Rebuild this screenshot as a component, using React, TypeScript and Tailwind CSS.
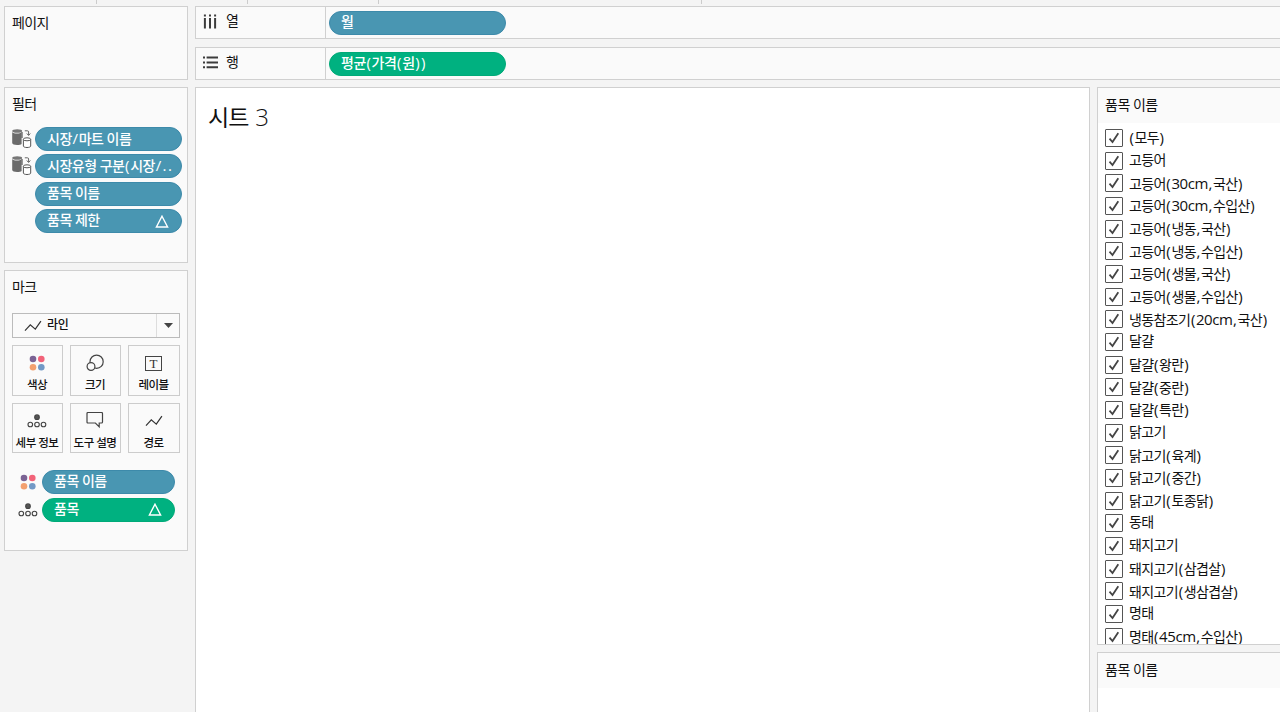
import { clsx } from "clsx";
import type { ReactNode } from "react";

const items = [
  "(모두)",
  "고등어",
  "고등어(30cm,국산)",
  "고등어(30cm,수입산)",
  "고등어(냉동,국산)",
  "고등어(냉동,수입산)",
  "고등어(생물,국산)",
  "고등어(생물,수입산)",
  "냉동참조기(20cm,국산)",
  "달걀",
  "달걀(왕란)",
  "달걀(중란)",
  "달걀(특란)",
  "닭고기",
  "닭고기(육계)",
  "닭고기(중간)",
  "닭고기(토종닭)",
  "동태",
  "돼지고기",
  "돼지고기(삼겹살)",
  "돼지고기(생삼겹살)",
  "명태",
  "명태(45cm,수입산)",
];

const filters = [
  { label: "시장/마트 이름", source: true },
  { label: "시장유형 구분(시장/..", source: true },
  { label: "품목 이름" },
  { label: "품목 제한", delta: true },
];

// Hangul is set tight, punctuation and latin runs get their own spacing
function Mixed({ text, mark }: { text: string; mark: string }) {
  return text.split(/([(),./]|[0-9a-z]+)/).map((run, i) =>
    i % 2 ? (
      <span key={i} className={/[0-9a-z]/.test(run) ? "text-[15px] leading-5 tracking-[-0.4px]" : mark}>
        {run}
      </span>
    ) : (
      run
    ),
  );
}

function ColorIcon() {
  return (
    <svg width="16" height="16" viewBox="0 0 16 16">
      <circle cx="4" cy="4" r="3.3" fill="#7b6394" />
      <circle cx="12.3" cy="4" r="3.3" fill="#f26379" />
      <circle cx="4" cy="12.2" r="3.3" fill="#f3a06f" />
      <circle cx="12.3" cy="12.2" r="3.3" fill="#7299c6" />
    </svg>
  );
}

function SizeIcon() {
  return (
    <svg width="18" height="18" viewBox="0 0 18 18" fill="#fafafa" stroke="#444" strokeWidth="1.2">
      <circle cx="10.6" cy="7.7" r="6.6" />
      <circle cx="5" cy="12.5" r="3.9" />
    </svg>
  );
}

function LabelIcon() {
  return (
    <span className="flex h-[15px] w-[17px] items-center justify-center border border-[#444] font-['Liberation_Serif',serif] text-[13px] leading-none text-[#333]">
      T
    </span>
  );
}

function DetailIcon() {
  return (
    <svg width="20" height="14" viewBox="0 0 20 14" fill="none" stroke="#444" strokeWidth="1.1">
      <circle cx="10" cy="3.2" r="2.3" fill="#555" />
      <circle cx="3.3" cy="10.5" r="2.3" />
      <circle cx="10" cy="10.5" r="2.3" />
      <circle cx="16.5" cy="10.5" r="2.3" />
    </svg>
  );
}

function TooltipIcon() {
  return (
    <svg width="18" height="17" viewBox="0 0 18 17" fill="none" stroke="#444" strokeWidth="1.2">
      <path d="M2 .5h13.5q1 0 1 1V10q0 1-1 1h-2.3v3.8L9.4 11H2q-1 0-1-1V1.5q0-1 1-1z" />
    </svg>
  );
}

function LineIcon() {
  return (
    <svg width="18" height="12" viewBox="0 0 18 12" fill="none" stroke="#333" strokeWidth="1.2">
      <path d="M1 10.6 6.3 4.8l5 4.3 5.6-8" />
    </svg>
  );
}

function SourceIcon() {
  return (
    <svg width="20" height="20" viewBox="0 0 20 20">
      <path d="M.2 3v11.1c0 1.1 2.2 2 4.9 2 2 0 3.8-.5 4.5-1.2V3c-1 1.1-2.6 1.6-4.7 1.6S1 4 .2 3z" fill="#6b6b6b" />
      <path d="M10 3v6" stroke="#6b6b6b" strokeWidth="1.4" />
      <ellipse cx="5.2" cy="2" rx="5" ry="1.8" fill="#777" />
      <path d="M12.8 1.8h2.6q1.2 0 1.2 1.2v3M14.8 4.5l1.8 2 1.7-2" fill="none" stroke="#666" />
      <path d="M11.4 10.4v6.7c0 .8 1.6 1.4 3.6 1.4s3.7-.6 3.7-1.4v-6.7" fill="#fff" stroke="#555" />
      <ellipse cx="15" cy="10.3" rx="3.7" ry="1.5" fill="#fff" stroke="#555" />
    </svg>
  );
}

function ColumnsIcon() {
  return (
    <svg width="14" height="15" viewBox="0 0 14 15" fill="#3c3c3c">
      <path d="M.9 .5h2v2h-2zM6 .5h2v2H6zM11.1 .5h2v2h-2zM.9 4h2v10.5h-2zM6 4h2v10.5H6zM11.1 4h2v10.5h-2z" />
    </svg>
  );
}

function RowsIcon() {
  return (
    <svg width="15" height="13" viewBox="0 0 15 13" fill="#3c3c3c">
      <path d="M0 .5h2v2H0zM0 5.4h2v2H0zM0 10.3h2v2H0zM3.6 .5H15v2H3.6zM3.6 5.4H15v2H3.6zM3.6 10.3H15v2H3.6z" />
    </svg>
  );
}

function Pill({ label, green, delta, className }: { label: string; green?: boolean; delta?: boolean; className?: string }) {
  return (
    <div
      className={clsx(
        "flex h-6 shrink-0 items-center justify-between rounded-full border pr-3 pl-[11px] text-sm leading-5 font-medium tracking-[-0.5px] whitespace-pre text-white",
        green ? "border-[#00aa78] bg-[#00b180]" : "border-[#3d8aaa] bg-[#4996b2]",
        className,
      )}
    >
      <span className="-mt-0.5">
        <Mixed text={label} mark="px-[0.7px] text-[15px] leading-5 tracking-normal" />
      </span>
      {delta && (
        <svg width="14" height="13" viewBox="0 0 14 13" fill="none" stroke="white" strokeWidth="1.4">
          <path d="M7 1.2 12.6 12H1.4z" />
        </svg>
      )}
    </div>
  );
}

function Panel({ title, className, children }: { title: string; className: string; children?: ReactNode }) {
  return (
    <section className={clsx("shrink-0 border border-[#d0d0d0] bg-[#fafafa] pt-1.5 pl-[7px]", className)}>
      <h2 className="text-sm leading-5 tracking-[-0.6px]">{title}</h2>
      {children}
    </section>
  );
}

function MarkButton({ label, children }: { label: string; children: ReactNode }) {
  return (
    <button className="flex h-[50.5px] flex-col items-center border border-[#ccc] pr-px">
      <span className="flex h-[29px] items-end justify-center">
        <span className="flex h-6 items-center">{children}</span>
      </span>
      <span className="mt-px text-[11.5px] leading-[18px] font-medium tracking-[-0.5px] whitespace-nowrap">{label}</span>
    </button>
  );
}

function Shelf({ icon, label, children }: { icon: ReactNode; label: string; children: ReactNode }) {
  return (
    <div className="flex h-[33px] shrink-0 border border-r-0 border-[#d0d0d0] bg-[#fafafa]">
      <div className="flex w-[130px] items-center border-r border-[#d0d0d0] pb-[3px] pl-[7px] text-sm leading-5">
        <span className="flex w-[23px]">{icon}</span>
        {label}
      </div>
      <div className="flex items-center pl-[3px]">{children}</div>
    </div>
  );
}

function CheckItem({ label }: { label: string }) {
  return (
    <li className="flex h-[22.68px] shrink-0 items-center">
      <span className="flex size-[18px] shrink-0 items-center justify-center rounded-[1px] border border-[#555] bg-white">
        <svg width="12" height="12" viewBox="0 0 12 12" fill="none" stroke="#444" strokeWidth="1.8">
          <path d="m1.5 6.7 3 3.3 5.8-8.7" />
        </svg>
      </span>
      <span className={clsx("ml-1.5 text-sm leading-5 tracking-[-0.6px] whitespace-nowrap", !label.includes("(") && "-mt-0.5")}>
        <Mixed text={label} mark="px-[0.5px] text-[15px] leading-5 tracking-[0.1px]" />
      </span>
    </li>
  );
}

export default function App() {
  return (
    <div className="flex h-[712px] w-[1280px] flex-col overflow-hidden bg-[#f4f4f4] font-['Open_Sans','Noto_Sans_CJK_KR',sans-serif] text-[#111]">
      <div className="flex h-1.5 shrink-0 items-start">
        <i className="ml-24 h-1 w-px bg-[#ccc]" />
        <i className="ml-[150px] h-1 w-px bg-[#ccc]" />
        <i className="ml-[130px] h-1 w-px bg-[#ccc]" />
        <i className="ml-[322px] h-1 w-px bg-[#ccc]" />
      </div>

      <div className="flex min-h-0 flex-1">
        <aside className="ml-1 flex w-[184px] shrink-0 flex-col gap-[7px]">
          <Panel title="페이지" className="h-[74px]" />

          <Panel title="필터" className="h-[176px]">
            <div className="mt-[13px] flex flex-col gap-[3.4px]">
              {filters.map((f) => (
                <div key={f.label} className="flex items-center">
                  <span className="w-[23px] shrink-0">{f.source && <SourceIcon />}</span>
                  <Pill label={f.label} delta={f.delta} className="w-[147px]" />
                </div>
              ))}
            </div>
          </Panel>

          <Panel title="마크" className="h-[281px]">
            <div className="mt-4 flex h-[25px] w-[168px] border border-[#bbb] text-xs leading-[22px] font-medium">
              <span className="flex flex-1 items-center gap-[5px] pl-[11px]">
                <LineIcon />
                <span className="-mt-0.5 tracking-[-0.3px]">라인</span>
              </span>
              <span className="flex w-[23px] items-center justify-center border-l border-[#ddd]">
                <svg width="9" height="5" viewBox="0 0 8 5" preserveAspectRatio="none">
                  <path d="M0 0h8L4 5z" fill="#444" />
                </svg>
              </span>
            </div>

            <div className="mt-[7px] grid w-[168px] grid-cols-[51px_51px_52px] gap-[7px]">
              <MarkButton label="색상"><ColorIcon /></MarkButton>
              <MarkButton label="크기"><SizeIcon /></MarkButton>
              <MarkButton label="레이블"><LabelIcon /></MarkButton>
              <MarkButton label="세부 정보"><DetailIcon /></MarkButton>
              <MarkButton label="도구 설명"><TooltipIcon /></MarkButton>
              <MarkButton label="경로"><LineIcon /></MarkButton>
            </div>

            <div className="mt-[17px] flex flex-col gap-[3.5px]">
              <div className="flex items-center">
                <span className="flex w-[30px] justify-center pl-0.5"><ColorIcon /></span>
                <Pill label="품목 이름" className="w-[133px]" />
              </div>
              <div className="flex items-center">
                <span className="flex w-[30px] justify-center pl-0.5"><DetailIcon /></span>
                <Pill label="품목" green delta className="w-[133px]" />
              </div>
            </div>
          </Panel>
        </aside>

        <div className="ml-[7px] flex min-w-0 flex-1 flex-col">
          <div className="flex shrink-0 flex-col gap-2">
            <Shelf icon={<ColumnsIcon />} label="열">
              <Pill label="월" className="w-[177px]" />
            </Shelf>
            <Shelf icon={<RowsIcon />} label="행">
              <Pill label="평균(가격(원))" green className="w-[177px]" />
            </Shelf>
          </div>

          <div className="mt-[7px] flex min-h-0 flex-1 gap-[7px]">
            <main className="w-[895px] shrink-0 border border-b-0 border-[#d0d0d0] bg-white pt-[11px] pl-3">
              <h1 className="text-[23px] leading-9 tracking-[-1px]">
                시트 <span className="ml-0.5 text-2xl font-light">3</span>
              </h1>
            </main>

            <div className="flex min-w-0 flex-1 flex-col gap-[7px]">
              <section className="h-[558px] shrink-0 overflow-hidden border border-r-0 border-[#d0d0d0] bg-white">
                <h2 className="h-[35px] bg-[#fafafa] pl-[7px] text-sm leading-[34px] tracking-[-0.5px]">품목 이름</h2>
                <ul className="mt-[3.5px] flex flex-col pl-[7px]">
                  {items.map((item) => (
                    <CheckItem key={item} label={item} />
                  ))}
                </ul>
              </section>
              <section className="flex-1 border border-r-0 border-b-0 border-[#d0d0d0] bg-white">
                <h2 className="h-[35px] bg-[#fafafa] pl-[7px] text-sm leading-[34px] tracking-[-0.5px]">품목 이름</h2>
              </section>
            </div>
          </div>
        </div>
      </div>
    </div>
  );
}
